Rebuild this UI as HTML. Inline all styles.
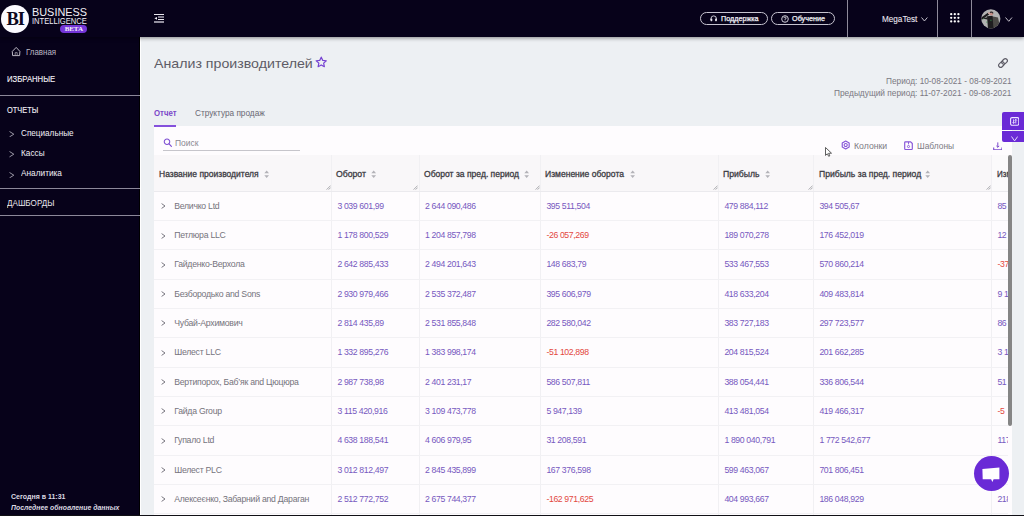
<!DOCTYPE html>
<html><head><meta charset="utf-8">
<style>
*{box-sizing:border-box;margin:0;padding:0}
html,body{width:1024px;height:516px;overflow:hidden;background:#edf0f3;font-family:"Liberation Sans",sans-serif;position:relative}
.a{position:absolute;white-space:nowrap;line-height:1}
.t{position:absolute;white-space:nowrap;line-height:1;transform-origin:0 0}
#side{position:absolute;left:0;top:0;width:140px;height:516px;background:#07021a}
#top{position:absolute;left:0;top:0;width:1024px;height:37px;background:#07021a;box-shadow:0 1px 4px rgba(0,0,0,.45);z-index:5}
.sdiv{position:absolute;left:0;width:140px;height:1px;background:#8c8899}
.btn{position:absolute;top:12px;height:13px;border:1px solid #c6c3cf;border-radius:7px}
.vsep{position:absolute;top:0;width:1px;height:37px;background:#8e8a9a}
#panel{position:absolute;left:154px;top:126px;width:858px;height:389px;background:#fefcfe}
.th{position:absolute;background:#f9f7f9;top:155px;height:36.3px}
.csep{position:absolute;width:1px;background:#f1f0f3}
.nm{color:#75737c;font-size:8.7px;letter-spacing:-0.25px}
.nu{color:#7659c0;font-size:8.7px;letter-spacing:-0.37px}
.ng{color:#e3483e}
</style></head><body>

<div id="side"></div>
<div class="a" style="left:140px;top:37px;width:1px;height:479px;background:#ffffff"></div>
<div class="a" style="left:139px;top:37px;width:1px;height:479px;background:#000"></div>
<div class="a" style="left:0;top:0;width:140px;height:37px;z-index:7">
<div class="a" style="left:1px;top:4.5px;width:28px;height:28px;border-radius:50%;background:#fbfaff"></div>
<div class="a" style="left:5.3px;top:9.6px;width:20px;text-align:center;font-family:'Liberation Serif',serif;font-weight:bold;font-size:18.5px;color:#0d0820;letter-spacing:-1px;line-height:19px">BI</div>
<div class="a" style="left:60px;top:25.2px;width:27px;height:7.5px;border-radius:4px;background:#7436d8"></div>
<div class="a" style="left:60.3px;top:25.9px;width:27px;text-align:center;font-family:'Liberation Serif',serif;font-weight:bold;font-size:7px;color:#f3effc;line-height:7px;letter-spacing:-0.1px">BETA</div>

<div class="t" style="left:32.16px;top:6.79px;font-size:11px;color:#f1eff6;transform:scaleX(0.9898);">BUSINESS</div>
<div class="t" style="left:32.32px;top:16.89px;font-size:8.4px;color:#f1eff6;transform:scaleX(0.9057);">INTELLIGENCE</div>
</div>
<svg class="a" style="left:8px;top:44px" width="16" height="16" viewBox="0 0 16 16"><path d="M8.2 3.4 L4.3 7.4 L4.6 11.6 H11.6 L11.9 7.4 Z" fill="none" stroke="#c4c1cc" stroke-width="0.95" stroke-linejoin="round"/><path d="M7.2 11.4 V8.6 H9.2 V11.4" fill="none" stroke="#9d9aa6" stroke-width="0.8"/></svg>
<div class="t" style="left:25.90px;top:48.22px;font-size:8.6px;color:#bcb9c5;transform:scaleX(0.9210);">Главная</div>
<div class="t" style="left:7.11px;top:75.05px;font-size:8.8px;color:#f4f2f8;transform:scaleX(0.8761);-webkit-text-stroke:0.12px #f4f2f8;">ИЗБРАННЫЕ</div>
<div class="sdiv" style="top:94.5px"></div>
<div class="t" style="left:7.03px;top:106.15px;font-size:8.8px;color:#f4f2f8;transform:scaleX(0.8405);-webkit-text-stroke:0.12px #f4f2f8;">ОТЧЕТЫ</div>
<svg class="a" style="left:8.60px;top:130.90px" width="5.5" height="6.4" viewBox="0 0 5.5 6.4"><path d="M0.5 0.5 L4.80 3.20 L0.5 5.90" fill="none" stroke="#bdbac6" stroke-width="0.8"/></svg>
<div class="t" style="left:20.89px;top:128.88px;font-size:9px;color:#f1eff6;transform:scaleX(0.9068);">Специальные</div>
<svg class="a" style="left:8.60px;top:151.20px" width="5.5" height="6.4" viewBox="0 0 5.5 6.4"><path d="M0.5 0.5 L4.80 3.20 L0.5 5.90" fill="none" stroke="#bdbac6" stroke-width="0.8"/></svg>
<div class="t" style="left:20.89px;top:149.18px;font-size:9px;color:#f1eff6;transform:scaleX(0.9160);">Кассы</div>
<svg class="a" style="left:8.60px;top:171.50px" width="5.5" height="6.4" viewBox="0 0 5.5 6.4"><path d="M0.5 0.5 L4.80 3.20 L0.5 5.90" fill="none" stroke="#bdbac6" stroke-width="0.8"/></svg>
<div class="t" style="left:20.89px;top:169.48px;font-size:9px;color:#f1eff6;transform:scaleX(0.9192);">Аналитика</div>
<div class="sdiv" style="top:187.8px"></div>
<div class="t" style="left:6.99px;top:198.68px;font-size:9px;color:#e9e7ee;transform:scaleX(0.9016);">ДАШБОРДЫ</div>
<div class="sdiv" style="top:215px"></div>
<div class="t" style="left:10.55px;top:493.34px;font-size:7.4px;color:#dcdae3;font-weight:700;transform:scaleX(0.9477);">Сегодня в 11:31</div>
<div class="t" style="left:10.56px;top:503.94px;font-size:7.4px;color:#dcdae3;font-weight:700;font-style:italic;transform:scaleX(0.9319);">Последнее обновление данных</div>
<div id="top"></div>
<div class="a" style="left:0;top:0;width:1024px;height:37px;z-index:6">
<svg class="a" style="left:154px;top:14px" width="10" height="9" viewBox="0 0 10 9"><rect x="0" y="0" width="10" height="1" fill="#e8e6ee"/><rect x="4" y="2.4" width="6" height="1.2" fill="#cfccd8"/><rect x="4" y="5" width="6" height="1" fill="#e8e6ee"/><rect x="0" y="7.3" width="10" height="1.4" fill="#cfccd8"/><path d="M0.4 4.3 L3 2.9 V5.8 Z" fill="#f4f2f8"/></svg>
<div class="btn" style="left:700px;width:68px"></div>
<div class="btn" style="left:771px;width:64px"></div>
<svg class="a" style="left:710px;top:15.3px" width="7.4" height="6.4" viewBox="0 0 7.4 6.4"><path d="M1 5 V3.6 A2.7 2.7 0 0 1 6.4 3.6 V5" fill="none" stroke="#e8e6ee" stroke-width="0.85"/><rect x="0.5" y="3.5" width="1.8" height="2.7" rx="0.6" fill="#e8e6ee"/><rect x="5.1" y="3.5" width="1.8" height="2.7" rx="0.6" fill="#e8e6ee"/></svg>
<svg class="a" style="left:780.5px;top:15px" width="8" height="8" viewBox="0 0 8 8"><circle cx="4" cy="4" r="3.3" fill="none" stroke="#e8e6ee" stroke-width="0.9"/><path d="M2.9 3.1 A1.1 1.1 0 1 1 4 4.2 V4.9" fill="none" stroke="#e8e6ee" stroke-width="0.8"/><circle cx="4" cy="5.9" r="0.45" fill="#e8e6ee"/></svg>
<div class="t" style="left:721.34px;top:14.84px;font-size:7.4px;color:#f4f2f8;transform:scaleX(0.9744);-webkit-text-stroke:0.25px #f4f2f8;">Поддержка</div>
<div class="t" style="left:792.14px;top:14.84px;font-size:7.4px;color:#f4f2f8;transform:scaleX(0.9788);-webkit-text-stroke:0.25px #f4f2f8;">Обучение</div>
<div class="vsep" style="left:847px"></div><div class="vsep" style="left:937px"></div><div class="vsep" style="left:971px"></div>
<div class="t" style="left:881.59px;top:14.55px;font-size:8.8px;color:#ece9f2;transform:scaleX(0.9269);-webkit-text-stroke:0.08px #ece9f2;">MegaTest</div>
<svg class="a" style="left:921.00px;top:16.80px" width="6.9" height="4.7" viewBox="0 0 6.9 4.7"><path d="M0.5 0.5 L3.45 4.00 L6.40 0.5" fill="none" stroke="#d8d5de" stroke-width="0.9"/></svg>
<svg class="a" style="left:949.8px;top:13.2px" width="10" height="10" viewBox="0 0 10 10"><circle cx="1.2" cy="1.2" r="1.15" fill="#fff"/><circle cx="1.2" cy="4.8" r="1.15" fill="#fff"/><circle cx="1.2" cy="8.4" r="1.15" fill="#fff"/><circle cx="4.8" cy="1.2" r="1.15" fill="#fff"/><circle cx="4.8" cy="4.8" r="1.15" fill="#fff"/><circle cx="4.8" cy="8.4" r="1.15" fill="#fff"/><circle cx="8.4" cy="1.2" r="1.15" fill="#fff"/><circle cx="8.4" cy="4.8" r="1.15" fill="#fff"/><circle cx="8.4" cy="8.4" r="1.15" fill="#fff"/></svg>
<svg class="a" style="left:980.8px;top:8.7px" width="20" height="20" viewBox="0 0 20 20"><defs><clipPath id="cc"><circle cx="9.8" cy="9.8" r="9.6"/></clipPath></defs><circle cx="9.8" cy="9.8" r="9.6" fill="#b2b2b2"/><g clip-path="url(#cc)"><path d="M9.5 7 L17 8.5 L19.5 20 L9.5 20 Z" fill="#4b4946"/><path d="M6 7.2 L11.5 6.8 L12.5 20 L7 20 Z" fill="#1e1d1f"/><path d="M0.8 9.6 C2.5 8 4.5 6.8 7.2 4.8" fill="none" stroke="#1c1b1d" stroke-width="2.1" stroke-linecap="round"/><path d="M1 9.4 L6.5 10.5 L6.5 8.2 Z" fill="#1c1b1d"/><circle cx="10.4" cy="4.5" r="1.9" fill="#c48d85"/><path d="M8.6 4 C8.8 2.3 11.5 2 12.3 3.6 L12 5 L11 3.8 Z" fill="#2b2a2c"/><circle cx="8" cy="4.3" r="1" fill="#d4a89e"/><rect x="2.3" y="9.5" width="0.9" height="0.9" fill="#4fae62"/><rect x="5.3" y="12.6" width="0.9" height="1" fill="#3ea055"/><rect x="9.6" y="10.6" width="0.7" height="1.5" fill="#3ea055"/></g></svg>
<svg class="a" style="left:1005.20px;top:17.00px" width="7.5" height="5.0" viewBox="0 0 7.5 5.0"><path d="M0.5 0.5 L3.75 4.30 L7.00 0.5" fill="none" stroke="#d8d5de" stroke-width="0.9"/></svg>
</div>
<div class="t" style="left:153.69px;top:56.89px;font-size:13.6px;color:#5e5c66;transform:scaleX(1.0436);">Анализ производителей</div>
<svg class="a" style="left:314.9px;top:56.1px" width="12.5" height="12.5" viewBox="0 0 24 24"><path d="M12 2.2 L14.9 8.4 L21.7 9.1 L16.6 13.7 L18 20.6 L12 17.2 L6 20.6 L7.4 13.7 L2.3 9.1 L9.1 8.4 Z" fill="none" stroke="#7643d2" stroke-width="2.3" stroke-linejoin="round"/></svg>
<svg class="a" style="left:996.5px;top:56.9px" width="12" height="12" viewBox="-6 -6 12 12"><g transform="rotate(-45)" fill="none" stroke="#5d5c66" stroke-width="1.15"><rect x="-5.3" y="-2.05" width="6.2" height="4.1" rx="2.05"/><rect x="-0.9" y="-2.05" width="6.2" height="4.1" rx="2.05"/></g></svg>
<div class="t" style="left:886.09px;top:76.57px;font-size:8.9px;color:#7a7882;transform:scaleX(0.9326);">Период: 10-08-2021 - 08-09-2021</div>
<div class="t" style="left:834.28px;top:88.87px;font-size:8.9px;color:#7a7882;transform:scaleX(0.9369);">Предыдущий период: 11-07-2021 - 09-08-2021</div>
<div class="t" style="left:153.91px;top:108.95px;font-size:8.8px;color:#7b48c9;font-weight:700;transform:scaleX(0.8888);">Отчет</div>
<div class="t" style="left:195.49px;top:108.95px;font-size:8.8px;color:#6a6873;transform:scaleX(0.9370);">Структура продаж</div>
<div id="panel"></div>
<div class="a" style="left:154px;top:124.9px;width:22px;height:1.9px;background:#8451dc"></div>
<svg class="a" style="left:163px;top:138px" width="10" height="10" viewBox="0 0 10 10"><circle cx="4" cy="3.7" r="2.75" fill="none" stroke="#7d4ed2" stroke-width="1.05"/><path d="M6.1 5.9 L8.4 8.3" stroke="#7d4ed2" stroke-width="1.15" stroke-linecap="round"/></svg>
<div class="t" style="left:175.38px;top:139.35px;font-size:8.8px;color:#8a8891;transform:scaleX(0.9626);">Поиск</div>
<div class="a" style="left:163.3px;top:149.8px;width:136.4px;height:1px;background:#c6c5cb"></div>
<svg class="a" style="left:841px;top:140.4px" width="10" height="10" viewBox="0 0 10 10"><path d="M4.7 1 L8.16 3 V7 L4.7 9 L1.24 7 V3 Z" fill="none" stroke="#8755d8" stroke-width="1.15" stroke-linejoin="round"/><circle cx="4.7" cy="5" r="1.55" fill="none" stroke="#8755d8" stroke-width="1.05"/></svg>
<div class="t" style="left:854.07px;top:141.55px;font-size:8.8px;color:#7d7b84;transform:scaleX(0.9886);">Колонки</div>
<svg class="a" style="left:903.5px;top:141.3px" width="9.5" height="9.5" viewBox="0 0 9.5 9.5"><path d="M1.4 0.9 H6.7 L8.3 2.5 V7.8 Q8.3 8.5 7.6 8.5 H1.4 Q0.7 8.5 0.7 7.8 V1.6 Q0.7 0.9 1.4 0.9 Z" fill="none" stroke="#8755d8" stroke-width="1.15" stroke-linejoin="round"/><path d="M4.5 0.9 V3.3" stroke="#8755d8" stroke-width="0.9"/><circle cx="4.5" cy="5.5" r="1.05" fill="none" stroke="#8755d8" stroke-width="0.9"/></svg>
<div class="t" style="left:917.08px;top:141.55px;font-size:8.8px;color:#7d7b84;transform:scaleX(0.9528);">Шаблоны</div>
<svg class="a" style="left:992.8px;top:141.8px" width="9.6" height="8.6" viewBox="0 0 9.6 8.6"><path d="M4.8 0.4 V5.2 M3.4 3.9 L4.8 5.3 L6.2 3.9" fill="none" stroke="#7a48cc" stroke-width="1"/><path d="M0.7 5.6 V7.9 H8.9 V5.6" fill="none" stroke="#7a48cc" stroke-width="1.1"/></svg>
<svg class="a" style="left:825px;top:146.8px;z-index:9" width="8" height="10" viewBox="0 0 8 10"><path d="M0.5 0.5 V8.4 L2.3 6.8 L3.7 9.3 L4.8 8.8 L3.6 6.3 L6.5 6.2 Z" fill="#fff" stroke="#2a2a2a" stroke-width="0.75" stroke-linejoin="round"/></svg>
<div class="th" style="left:154px;width:177.0px;"></div>
<div class="th" style="left:331px;width:87.6px;"></div>
<div class="th" style="left:418.6px;width:121.4px;"></div>
<div class="th" style="left:540px;width:178.0px;"></div>
<div class="th" style="left:718px;width:95.0px;"></div>
<div class="th" style="left:813px;width:178.0px;"></div>
<div class="th" style="left:991px;width:17.0px;background:#fbfafb"></div>
<div class="csep" style="left:331.0px;top:155px;height:360px"></div>
<div class="csep" style="left:418.6px;top:155px;height:360px"></div>
<div class="csep" style="left:540.0px;top:155px;height:360px"></div>
<div class="csep" style="left:718.0px;top:155px;height:360px"></div>
<div class="csep" style="left:813.0px;top:155px;height:360px"></div>
<div class="csep" style="left:991.0px;top:155px;height:360px"></div>
<div class="t" style="left:158.97px;top:169.68px;font-size:9px;color:#3c3b43;transform:scaleX(0.9458);-webkit-text-stroke:0.3px #3c3b43;">Название производителя</div>
<svg class="a" style="left:263.5px;top:169.6px" width="5.4" height="8.4" viewBox="0 0 5.4 8.4"><path d="M0.3 3.3 L2.7 0.4 L5.1 3.3 Z M0.3 5.2 L2.7 8 L5.1 5.2 Z" fill="#b3b2b8"/></svg>
<svg class="a" style="left:325.7px;top:185px" width="5" height="5" viewBox="0 0 5 5"><path d="M4.6 0.6 L0.6 4.6 M4.6 2.6 L2.6 4.6" stroke="#8a8990" stroke-width="0.7"/></svg>
<div class="t" style="left:336.47px;top:169.68px;font-size:9px;color:#3c3b43;transform:scaleX(0.9642);-webkit-text-stroke:0.3px #3c3b43;">Оборот</div>
<svg class="a" style="left:371.2px;top:169.6px" width="5.4" height="8.4" viewBox="0 0 5.4 8.4"><path d="M0.3 3.3 L2.7 0.4 L5.1 3.3 Z M0.3 5.2 L2.7 8 L5.1 5.2 Z" fill="#b3b2b8"/></svg>
<svg class="a" style="left:413.3px;top:185px" width="5" height="5" viewBox="0 0 5 5"><path d="M4.6 0.6 L0.6 4.6 M4.6 2.6 L2.6 4.6" stroke="#8a8990" stroke-width="0.7"/></svg>
<div class="t" style="left:423.87px;top:169.68px;font-size:9px;color:#3c3b43;transform:scaleX(0.9495);-webkit-text-stroke:0.3px #3c3b43;">Оборот за пред. период</div>
<svg class="a" style="left:523.8px;top:169.6px" width="5.4" height="8.4" viewBox="0 0 5.4 8.4"><path d="M0.3 3.3 L2.7 0.4 L5.1 3.3 Z M0.3 5.2 L2.7 8 L5.1 5.2 Z" fill="#b3b2b8"/></svg>
<svg class="a" style="left:534.7px;top:185px" width="5" height="5" viewBox="0 0 5 5"><path d="M4.6 0.6 L0.6 4.6 M4.6 2.6 L2.6 4.6" stroke="#8a8990" stroke-width="0.7"/></svg>
<div class="t" style="left:545.47px;top:169.68px;font-size:9px;color:#3c3b43;transform:scaleX(0.9484);-webkit-text-stroke:0.3px #3c3b43;">Изменение оборота</div>
<svg class="a" style="left:630.0px;top:169.6px" width="5.4" height="8.4" viewBox="0 0 5.4 8.4"><path d="M0.3 3.3 L2.7 0.4 L5.1 3.3 Z M0.3 5.2 L2.7 8 L5.1 5.2 Z" fill="#b3b2b8"/></svg>
<svg class="a" style="left:712.7px;top:185px" width="5" height="5" viewBox="0 0 5 5"><path d="M4.6 0.6 L0.6 4.6 M4.6 2.6 L2.6 4.6" stroke="#8a8990" stroke-width="0.7"/></svg>
<div class="t" style="left:722.87px;top:169.68px;font-size:9px;color:#3c3b43;transform:scaleX(0.9610);-webkit-text-stroke:0.3px #3c3b43;">Прибыль</div>
<svg class="a" style="left:764.7px;top:169.6px" width="5.4" height="8.4" viewBox="0 0 5.4 8.4"><path d="M0.3 3.3 L2.7 0.4 L5.1 3.3 Z M0.3 5.2 L2.7 8 L5.1 5.2 Z" fill="#b3b2b8"/></svg>
<svg class="a" style="left:807.7px;top:185px" width="5" height="5" viewBox="0 0 5 5"><path d="M4.6 0.6 L0.6 4.6 M4.6 2.6 L2.6 4.6" stroke="#8a8990" stroke-width="0.7"/></svg>
<div class="t" style="left:818.57px;top:169.68px;font-size:9px;color:#3c3b43;transform:scaleX(0.9540);-webkit-text-stroke:0.3px #3c3b43;">Прибыль за пред. период</div>
<svg class="a" style="left:925.2px;top:169.6px" width="5.4" height="8.4" viewBox="0 0 5.4 8.4"><path d="M0.3 3.3 L2.7 0.4 L5.1 3.3 Z M0.3 5.2 L2.7 8 L5.1 5.2 Z" fill="#b3b2b8"/></svg>
<svg class="a" style="left:985.7px;top:185px" width="5" height="5" viewBox="0 0 5 5"><path d="M4.6 0.6 L0.6 4.6 M4.6 2.6 L2.6 4.6" stroke="#8a8990" stroke-width="0.7"/></svg>
<div class="a" style="left:992px;top:155px;width:16px;height:36px;overflow:hidden"><div class="a" style="left:5.3px;top:14.8px;font-size:9px;color:#3c3b43;-webkit-text-stroke:0.3px #3c3b43;transform:scaleX(0.89);transform-origin:0 0">Изменение прибыли</div></div>
<div class="a" style="left:154px;top:190.80px;width:854px;height:1px;background:#ebeaee"></div>
<div class="a" style="left:154px;top:191px;width:854px;height:324px;overflow:hidden">
<div class="a" style="left:0;top:29.10px;width:854px;height:1px;background:#f2f1f4"></div>
<svg class="a" style="left:7.1px;top:12.20px" width="5" height="6" viewBox="0 0 5 6"><path d="M0.6 0.6 L4 3 L0.6 5.4" fill="none" stroke="#6a6872" stroke-width="0.9"/></svg>
<div class="a nm" style="left:20.19999999999999px;top:10.84px">Величко Ltd</div>
<div class="a nu" style="left:183.4px;top:10.84px">3 039 601,99</div>
<div class="a nu" style="left:271.0px;top:10.84px">2 644 090,486</div>
<div class="a nu" style="left:392.4px;top:10.84px">395 511,504</div>
<div class="a nu" style="left:570.4px;top:10.84px">479 884,112</div>
<div class="a nu" style="left:665.4px;top:10.84px">394 505,67</div>
<div class="a nu" style="left:843.4px;top:10.84px">85</div>
<div class="a" style="left:0;top:58.40px;width:854px;height:1px;background:#f2f1f4"></div>
<svg class="a" style="left:7.1px;top:41.50px" width="5" height="6" viewBox="0 0 5 6"><path d="M0.6 0.6 L4 3 L0.6 5.4" fill="none" stroke="#6a6872" stroke-width="0.9"/></svg>
<div class="a nm" style="left:20.19999999999999px;top:40.14px">Петлюра LLC</div>
<div class="a nu" style="left:183.4px;top:40.14px">1 178 800,529</div>
<div class="a nu" style="left:271.0px;top:40.14px">1 204 857,798</div>
<div class="a nu ng" style="left:392.4px;top:40.14px">-26 057,269</div>
<div class="a nu" style="left:570.4px;top:40.14px">189 070,278</div>
<div class="a nu" style="left:665.4px;top:40.14px">176 452,019</div>
<div class="a nu" style="left:843.4px;top:40.14px">12</div>
<div class="a" style="left:0;top:87.70px;width:854px;height:1px;background:#f2f1f4"></div>
<svg class="a" style="left:7.1px;top:70.80px" width="5" height="6" viewBox="0 0 5 6"><path d="M0.6 0.6 L4 3 L0.6 5.4" fill="none" stroke="#6a6872" stroke-width="0.9"/></svg>
<div class="a nm" style="left:20.19999999999999px;top:69.44px">Гайденко-Верхола</div>
<div class="a nu" style="left:183.4px;top:69.44px">2 642 885,433</div>
<div class="a nu" style="left:271.0px;top:69.44px">2 494 201,643</div>
<div class="a nu" style="left:392.4px;top:69.44px">148 683,79</div>
<div class="a nu" style="left:570.4px;top:69.44px">533 467,553</div>
<div class="a nu" style="left:665.4px;top:69.44px">570 860,214</div>
<div class="a nu ng" style="left:843.4px;top:69.44px">-37</div>
<div class="a" style="left:0;top:117.00px;width:854px;height:1px;background:#f2f1f4"></div>
<svg class="a" style="left:7.1px;top:100.10px" width="5" height="6" viewBox="0 0 5 6"><path d="M0.6 0.6 L4 3 L0.6 5.4" fill="none" stroke="#6a6872" stroke-width="0.9"/></svg>
<div class="a nm" style="left:20.19999999999999px;top:98.74px">Безбородько and Sons</div>
<div class="a nu" style="left:183.4px;top:98.74px">2 930 979,466</div>
<div class="a nu" style="left:271.0px;top:98.74px">2 535 372,487</div>
<div class="a nu" style="left:392.4px;top:98.74px">395 606,979</div>
<div class="a nu" style="left:570.4px;top:98.74px">418 633,204</div>
<div class="a nu" style="left:665.4px;top:98.74px">409 483,814</div>
<div class="a nu" style="left:843.4px;top:98.74px">9 1</div>
<div class="a" style="left:0;top:146.30px;width:854px;height:1px;background:#f2f1f4"></div>
<svg class="a" style="left:7.1px;top:129.40px" width="5" height="6" viewBox="0 0 5 6"><path d="M0.6 0.6 L4 3 L0.6 5.4" fill="none" stroke="#6a6872" stroke-width="0.9"/></svg>
<div class="a nm" style="left:20.19999999999999px;top:128.04px">Чубай-Архимович</div>
<div class="a nu" style="left:183.4px;top:128.04px">2 814 435,89</div>
<div class="a nu" style="left:271.0px;top:128.04px">2 531 855,848</div>
<div class="a nu" style="left:392.4px;top:128.04px">282 580,042</div>
<div class="a nu" style="left:570.4px;top:128.04px">383 727,183</div>
<div class="a nu" style="left:665.4px;top:128.04px">297 723,577</div>
<div class="a nu" style="left:843.4px;top:128.04px">86</div>
<div class="a" style="left:0;top:175.60px;width:854px;height:1px;background:#f2f1f4"></div>
<svg class="a" style="left:7.1px;top:158.70px" width="5" height="6" viewBox="0 0 5 6"><path d="M0.6 0.6 L4 3 L0.6 5.4" fill="none" stroke="#6a6872" stroke-width="0.9"/></svg>
<div class="a nm" style="left:20.19999999999999px;top:157.34px">Шелест LLC</div>
<div class="a nu" style="left:183.4px;top:157.34px">1 332 895,276</div>
<div class="a nu" style="left:271.0px;top:157.34px">1 383 998,174</div>
<div class="a nu ng" style="left:392.4px;top:157.34px">-51 102,898</div>
<div class="a nu" style="left:570.4px;top:157.34px">204 815,524</div>
<div class="a nu" style="left:665.4px;top:157.34px">201 662,285</div>
<div class="a nu" style="left:843.4px;top:157.34px">3 1</div>
<div class="a" style="left:0;top:204.90px;width:854px;height:1px;background:#f2f1f4"></div>
<svg class="a" style="left:7.1px;top:188.00px" width="5" height="6" viewBox="0 0 5 6"><path d="M0.6 0.6 L4 3 L0.6 5.4" fill="none" stroke="#6a6872" stroke-width="0.9"/></svg>
<div class="a nm" style="left:20.19999999999999px;top:186.64px">Вертипорох, Баб’як and Цюцюра</div>
<div class="a nu" style="left:183.4px;top:186.64px">2 987 738,98</div>
<div class="a nu" style="left:271.0px;top:186.64px">2 401 231,17</div>
<div class="a nu" style="left:392.4px;top:186.64px">586 507,811</div>
<div class="a nu" style="left:570.4px;top:186.64px">388 054,441</div>
<div class="a nu" style="left:665.4px;top:186.64px">336 806,544</div>
<div class="a nu" style="left:843.4px;top:186.64px">51</div>
<div class="a" style="left:0;top:234.20px;width:854px;height:1px;background:#f2f1f4"></div>
<svg class="a" style="left:7.1px;top:217.30px" width="5" height="6" viewBox="0 0 5 6"><path d="M0.6 0.6 L4 3 L0.6 5.4" fill="none" stroke="#6a6872" stroke-width="0.9"/></svg>
<div class="a nm" style="left:20.19999999999999px;top:215.94px">Гайда Group</div>
<div class="a nu" style="left:183.4px;top:215.94px">3 115 420,916</div>
<div class="a nu" style="left:271.0px;top:215.94px">3 109 473,778</div>
<div class="a nu" style="left:392.4px;top:215.94px">5 947,139</div>
<div class="a nu" style="left:570.4px;top:215.94px">413 481,054</div>
<div class="a nu" style="left:665.4px;top:215.94px">419 466,317</div>
<div class="a nu ng" style="left:843.4px;top:215.94px">-5</div>
<div class="a" style="left:0;top:263.50px;width:854px;height:1px;background:#f2f1f4"></div>
<svg class="a" style="left:7.1px;top:246.60px" width="5" height="6" viewBox="0 0 5 6"><path d="M0.6 0.6 L4 3 L0.6 5.4" fill="none" stroke="#6a6872" stroke-width="0.9"/></svg>
<div class="a nm" style="left:20.19999999999999px;top:245.24px">Гупало Ltd</div>
<div class="a nu" style="left:183.4px;top:245.24px">4 638 188,541</div>
<div class="a nu" style="left:271.0px;top:245.24px">4 606 979,95</div>
<div class="a nu" style="left:392.4px;top:245.24px">31 208,591</div>
<div class="a nu" style="left:570.4px;top:245.24px">1 890 040,791</div>
<div class="a nu" style="left:665.4px;top:245.24px">1 772 542,677</div>
<div class="a nu" style="left:843.4px;top:245.24px">117</div>
<div class="a" style="left:0;top:292.80px;width:854px;height:1px;background:#f2f1f4"></div>
<svg class="a" style="left:7.1px;top:275.90px" width="5" height="6" viewBox="0 0 5 6"><path d="M0.6 0.6 L4 3 L0.6 5.4" fill="none" stroke="#6a6872" stroke-width="0.9"/></svg>
<div class="a nm" style="left:20.19999999999999px;top:274.54px">Шелест PLC</div>
<div class="a nu" style="left:183.4px;top:274.54px">3 012 812,497</div>
<div class="a nu" style="left:271.0px;top:274.54px">2 845 435,899</div>
<div class="a nu" style="left:392.4px;top:274.54px">167 376,598</div>
<div class="a nu" style="left:570.4px;top:274.54px">599 463,067</div>
<div class="a nu" style="left:665.4px;top:274.54px">701 806,451</div>
<div class="a nu" style="left:843.4px;top:274.54px">218</div>
<div class="a" style="left:0;top:322.10px;width:854px;height:1px;background:#f2f1f4"></div>
<svg class="a" style="left:7.1px;top:305.20px" width="5" height="6" viewBox="0 0 5 6"><path d="M0.6 0.6 L4 3 L0.6 5.4" fill="none" stroke="#6a6872" stroke-width="0.9"/></svg>
<div class="a nm" style="left:20.19999999999999px;top:303.84px">Алексеєнко, Забарний and Дараган</div>
<div class="a nu" style="left:183.4px;top:303.84px">2 512 772,752</div>
<div class="a nu" style="left:271.0px;top:303.84px">2 675 744,377</div>
<div class="a nu ng" style="left:392.4px;top:303.84px">-162 971,625</div>
<div class="a nu" style="left:570.4px;top:303.84px">404 993,667</div>
<div class="a nu" style="left:665.4px;top:303.84px">186 048,929</div>
<div class="a nu" style="left:843.4px;top:303.84px">218</div>
</div>
<div class="a" style="left:1008px;top:155px;width:4.2px;height:271px;border-radius:2px;background:#858585"></div>
<div class="a" style="left:1002.3px;top:112.2px;width:22px;height:18.3px;background:#6a2ad6;border-radius:2px 0 0 0"></div>
<div class="a" style="left:1002.3px;top:130.5px;width:22px;height:0.7px;background:#a784e8"></div>
<div class="a" style="left:1002.3px;top:131.2px;width:22px;height:11.2px;background:#6a2ad6;border-radius:0 0 0 2px"></div>
<svg class="a" style="left:1009.8px;top:117.4px" width="9.4" height="8.8" viewBox="0 0 9.4 8.8"><rect x="0.6" y="0.6" width="8.2" height="7.6" rx="1.4" fill="none" stroke="#efe6ff" stroke-width="1.1"/><path d="M3.6 2.4 V6.4 M2.6 5.3 L3.6 6.4 L4.6 5.3 M5.8 6.4 V2.4 M4.8 3.5 L5.8 2.4 L6.8 3.5" fill="none" stroke="#efe6ff" stroke-width="0.9"/></svg>

<svg class="a" style="left:1010.60px;top:136.00px" width="7.2" height="5.6" viewBox="0 0 7.2 5.6"><path d="M0.5 0.5 L3.60 4.90 L6.70 0.5" fill="none" stroke="#eee6fc" stroke-width="0.9"/></svg>
<div class="a" style="left:973.7px;top:455.8px;width:35.3px;height:35.3px;border-radius:50%;background:#6a2ad6"></div>
<svg class="a" style="left:982px;top:466.5px" width="18" height="16" viewBox="0 0 18 16"><path d="M0.4 2.1 L17.4 0.4 V12.3 L11.6 12.3 L10.4 15 L9.1 12.3 L0.7 12.3 Z" fill="#fff"/></svg>

<div class="a" style="left:0;top:514.5px;width:1024px;height:2px;background:#111016;z-index:9"></div>
</body></html>
